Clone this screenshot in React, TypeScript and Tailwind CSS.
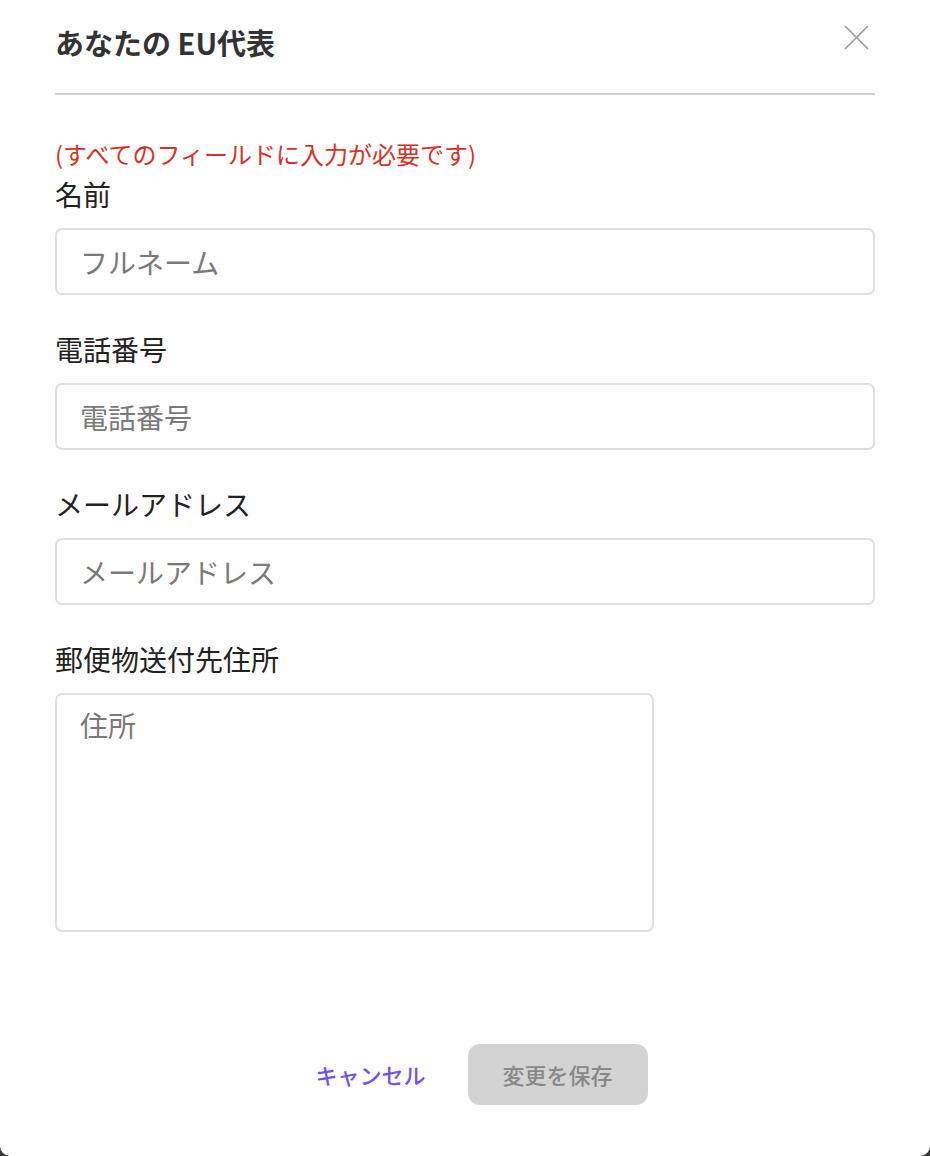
const font = { fontFamily: '"Noto Sans CJK JP", "Noto Sans", sans-serif' };

function Field({ label, placeholder }: { label: string; placeholder: string }) {
  return (
    <div className="flex flex-col">
      <label className="text-[28px] leading-[36px] text-[#222]">{label}</label>
      <input
        type="text"
        placeholder={placeholder}
        className="mt-[16px] h-[67px] w-full rounded-[7px] border-2 border-[#e0e0e0] bg-white px-[23px] text-[28px] text-[#222] outline-none placeholder:text-[#7a7a7a]"
      />
    </div>
  );
}

export default function App() {
  return (
    <div className="min-h-[1156px] w-[930px] bg-[#3a3a3a]" style={font}>
      <div className="flex h-[1156px] w-[930px] flex-col rounded-b-[10px] bg-white px-[55px]">
        {/* Header */}
        <header className="flex items-start justify-between border-b-2 border-[#d0d0d0] pt-[24px] pb-[33px]">
          <h1 className="text-[29px] font-bold leading-[36px] text-[#333]">あなたの EU代表</h1>
          <button className="mt-[1px] mr-[6px] text-[#9a9a9a]">
            <svg width="25" height="25" viewBox="0 0 25 25" fill="none" stroke="currentColor" strokeWidth="1.6" strokeLinecap="round">
              <path d="M1.5 1.5 L23.5 23.5 M23.5 1.5 L1.5 23.5" />
            </svg>
          </button>
        </header>

        <p className="mt-[44px] text-[24px] leading-[30px] text-[#d93025]">
          (すべてのフィールドに入力が必要です)
        </p>

        <div className="mt-[7px] flex flex-col gap-[36px]">
          <Field label="名前" placeholder="フルネーム" />
          <Field label="電話番号" placeholder="電話番号" />
          <Field label="メールアドレス" placeholder="メールアドレス" />
          <div className="flex flex-col">
            <label className="text-[28px] leading-[36px] text-[#222]">郵便物送付先住所</label>
            <textarea
              placeholder="住所"
              className="mt-[16px] h-[239px] w-[599px] resize-none rounded-[7px] border-2 border-[#e0e0e0] bg-white px-[23px] py-[12px] text-[28px] leading-[36px] text-[#222] outline-none placeholder:text-[#7a7a7a]"
            />
          </div>
        </div>

        {/* Footer */}
        <div className="mt-auto mb-[51px] flex items-center justify-center gap-[42px] pl-[33px]">
          <button className="text-[22px] font-medium text-[#7450f0]">キャンセル</button>
          <button
            disabled
            className="h-[61px] w-[180px] rounded-[12px] bg-[#d3d3d3] text-[22px] font-medium text-[#888]"
          >
            変更を保存
          </button>
        </div>
      </div>
    </div>
  );
}
